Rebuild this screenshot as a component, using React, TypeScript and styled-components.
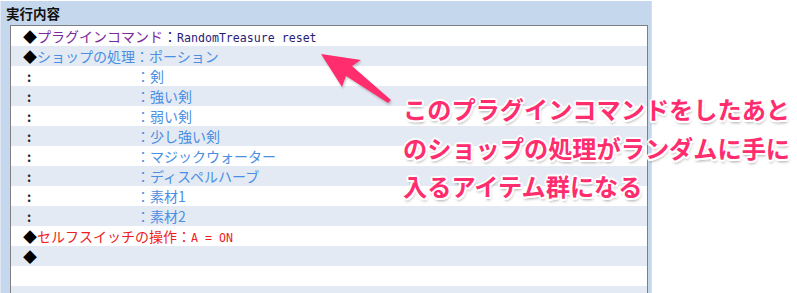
import React, { FC } from "react"
import styled, { createGlobalStyle } from "styled-components"

const GlobalStyle = createGlobalStyle`
  html, body {
    margin: 0;
    padding: 0;
    background: #ffffff;
  }
  body {
    width: 797px;
    height: 293px;
    overflow: hidden;
    font-family: "Noto Sans CJK JP", "Noto Sans", sans-serif;
  }
`

type Kind = "plugin" | "shop" | "item" | "switch" | "end" | "blank"

type Line = {
  kind: Kind
  label?: string
  value?: string
}

const lines: Line[] = [
  { kind: "plugin", label: "プラグインコマンド", value: "RandomTreasure reset" },
  { kind: "shop", label: "ショップの処理", value: "ポーション" },
  { kind: "item", value: "剣" },
  { kind: "item", value: "強い剣" },
  { kind: "item", value: "弱い剣" },
  { kind: "item", value: "少し強い剣" },
  { kind: "item", value: "マジックウォーター" },
  { kind: "item", value: "ディスペルハーブ" },
  { kind: "item", value: "素材1" },
  { kind: "item", value: "素材2" },
  { kind: "switch", label: "セルフスイッチの操作", value: "A = ON" },
  { kind: "end" },
  { kind: "blank" },
  { kind: "blank" },
]

const colors: Record<Kind, string> = {
  plugin: "#7b2a9c",
  shop: "#4b8fe4",
  item: "#4b8fe4",
  switch: "#ee1c1c",
  end: "#000000",
  blank: "#000000",
}

const App: FC = () => {
  return (
    <>
      <GlobalStyle />
      <Stage lang="ja">
        <Panel>
          <Title>実行内容</Title>
          <List>
            {lines.map((line, i) => (
              <Row key={i} $striped={i % 2 === 1}>
                {line.kind === "item" ? (
                  <>
                    <Cont>:</Cont>
                    <Text $color={colors.item}>
                      <Colon>：</Colon>
                      {line.value}
                    </Text>
                  </>
                ) : line.kind === "blank" ? null : (
                  <>
                    <Diamond>◆</Diamond>
                    {line.label && (
                      <Text $color={colors[line.kind]}>
                        {line.label}
                        {line.kind === "plugin" ? (
                          <Text $color="#1f2277">
                            <Colon>：</Colon>
                            <Mono>{line.value}</Mono>
                          </Text>
                        ) : line.kind === "switch" ? (
                          <>
                            <Colon>：</Colon>
                            <Mono>{line.value}</Mono>
                          </>
                        ) : (
                          <>
                            <Colon>：</Colon>
                            {line.value}
                          </>
                        )}
                      </Text>
                    )}
                  </>
                )}
              </Row>
            ))}
          </List>
        </Panel>

        <Arrow width="90" height="60" viewBox="0 0 90 60">
          <polygon
            points="1,1 41,7 32,13 71,47 68,50 26,23 22,34"
            fill="#ff2d6e"
          />
        </Arrow>

        <Note>
          このプラグインコマンドをしたあと
          <br />
          のショップの処理がランダムに手に
          <br />
          入るアイテム群になる
        </Note>
      </Stage>
    </>
  )
}

export default App

const Stage = styled.div`
  position: relative;
  width: 797px;
  height: 293px;
  overflow: hidden;
`

const Panel = styled.div`
  box-sizing: border-box;
  width: 652px;
  height: 300px;
  margin-top: 1px;
  background: #c5d7ec;
  border-left: 1px solid #dfe8f4;
  border-right: 1px solid #d3e0f0;
  padding: 0 3px 0 9px;
  display: flex;
  flex-direction: column;
`

const Title = styled.div`
  height: 26px;
  line-height: 24px;
  margin-left: -4px;
  font-size: 13.5px;
  font-weight: bold;
  color: #111111;
`

const List = styled.div`
  flex: 1;
  background: #ffffff;
  border-left: 1px solid #7d7f85;
  border-top: 1px solid #7d7f85;
  border-right: 1px solid #7d7f85;
  display: flex;
  flex-direction: column;
`

const Row = styled.div<{ $striped: boolean }>`
  height: 20px;
  flex-shrink: 0;
  display: flex;
  align-items: center;
  padding-left: 12px;
  background: ${p => (p.$striped ? "#e3eaf3" : "#ffffff")};
  font-size: 14px;
  white-space: nowrap;
`

const Diamond = styled.span`
  width: 14px;
  color: #000000;
  font-size: 14px;
`

const Cont = styled.span`
  width: 113px;
  padding-left: 4px;
  box-sizing: border-box;
  color: #222222;
  font-weight: bold;
  font-size: 13px;
`

const Text = styled.span<{ $color: string }>`
  color: ${p => p.$color};
  font-size: 14px;
`

const Colon = styled.span`
  display: inline-block;
  width: 14px;
  text-align: center;
`

const Mono = styled.span`
  font-family: "DejaVu Sans Mono", "Liberation Mono", monospace;
  font-size: 11.6px;
`

const Arrow = styled.svg`
  position: absolute;
  left: 320px;
  top: 53px;
  filter: drop-shadow(1px 2px 1px rgba(0, 0, 0, 0.2));
`

const Note = styled.div`
  position: absolute;
  left: 403px;
  top: 90px;
  font-size: 24.2px;
  line-height: 38.5px;
  font-weight: bold;
  color: #ff2d6e;
  white-space: nowrap;
  text-shadow:
    -2px 0 0 #fff, 2px 0 0 #fff, 0 -2px 0 #fff, 0 2px 0 #fff,
    -1.5px -1.5px 0 #fff, 1.5px -1.5px 0 #fff, -1.5px 1.5px 0 #fff,
    1.5px 1.5px 0 #fff, 1px 3px 3px rgba(0, 0, 0, 0.35);
`
